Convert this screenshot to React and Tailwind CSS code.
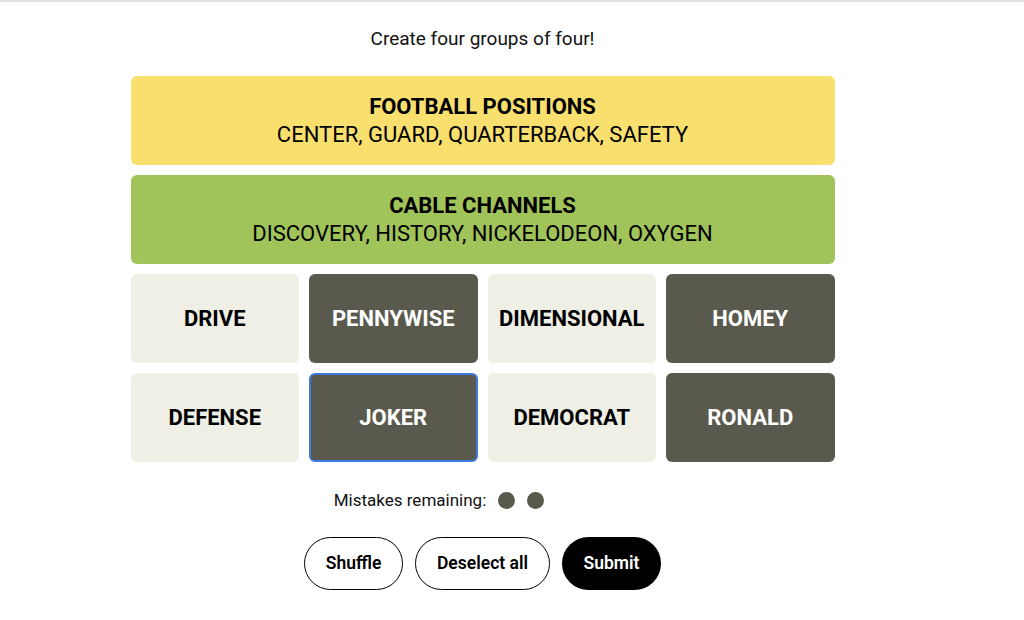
import React from 'react'

const solved = [
  { title: 'FOOTBALL POSITIONS', words: 'CENTER, GUARD, QUARTERBACK, SAFETY', color: 'bg-[#f9df6d]' },
  { title: 'CABLE CHANNELS', words: 'DISCOVERY, HISTORY, NICKELODEON, OXYGEN', color: 'bg-[#a0c35a]' },
]

const tiles = [
  { word: 'DRIVE' },
  { word: 'PENNYWISE', selected: true },
  { word: 'DIMENSIONAL' },
  { word: 'HOMEY', selected: true },
  { word: 'DEFENSE' },
  { word: 'JOKER', selected: true, focused: true },
  { word: 'DEMOCRAT' },
  { word: 'RONALD', selected: true },
]

const mistakesLeft = 2

export default function App() {
  return (
    <div className="min-h-[620px] bg-white border-t-2 border-[#e2e2e2] font-['Roboto',sans-serif] text-black">
      {/* game column sits left of the page centre */}
      <div className="w-[965px] flex flex-col items-center">
        <p className="mt-[24px] text-[19px] leading-[26px] text-[#121212]">Create four groups of four!</p>

        <div className="mt-[24px] w-[704px] flex flex-col gap-[10px]">
          {solved.map((g) => (
            <div
              key={g.title}
              className={`${g.color} h-[89px] rounded-md flex flex-col items-center justify-center`}
            >
              <div className="text-[22px] leading-[28px] font-bold">{g.title}</div>
              <div className="text-[22px] leading-[28px]">{g.words}</div>
            </div>
          ))}

          <div className="grid grid-cols-4 gap-[10px]">
            {tiles.map((t) => (
              <button
                key={t.word}
                className={`h-[89px] rounded-md flex items-center justify-center text-[22px] font-bold ${
                  t.selected ? 'bg-[#5a594e] text-white' : 'bg-[#efefe6] text-black'
                } ${t.focused ? 'border-2 border-[#3b7ae0]' : ''}`}
              >
                {t.word}
              </button>
            ))}
          </div>
        </div>

        {/* used mistakes keep their slot, just hidden */}
        <div className="mt-[26px] flex items-center gap-[12px] text-[17px] text-[#121212]">
          <span>Mistakes remaining:</span>
          <div className="flex gap-[12px]">
            {[0, 1, 2, 3, 4].map((i) => (
              <span
                key={i}
                className={`w-[17px] h-[17px] rounded-full bg-[#5a594e] ${i < mistakesLeft ? '' : 'invisible'}`}
              />
            ))}
          </div>
        </div>

        <div className="mt-[23px] flex gap-[12px] text-[17.5px] font-semibold">
          <button className="h-[53px] w-[99px] rounded-full border border-black bg-white">Shuffle</button>
          <button className="h-[53px] w-[135px] rounded-full border border-black bg-white">Deselect all</button>
          <button className="h-[53px] w-[99px] rounded-full bg-black text-white">Submit</button>
        </div>
      </div>
    </div>
  )
}
